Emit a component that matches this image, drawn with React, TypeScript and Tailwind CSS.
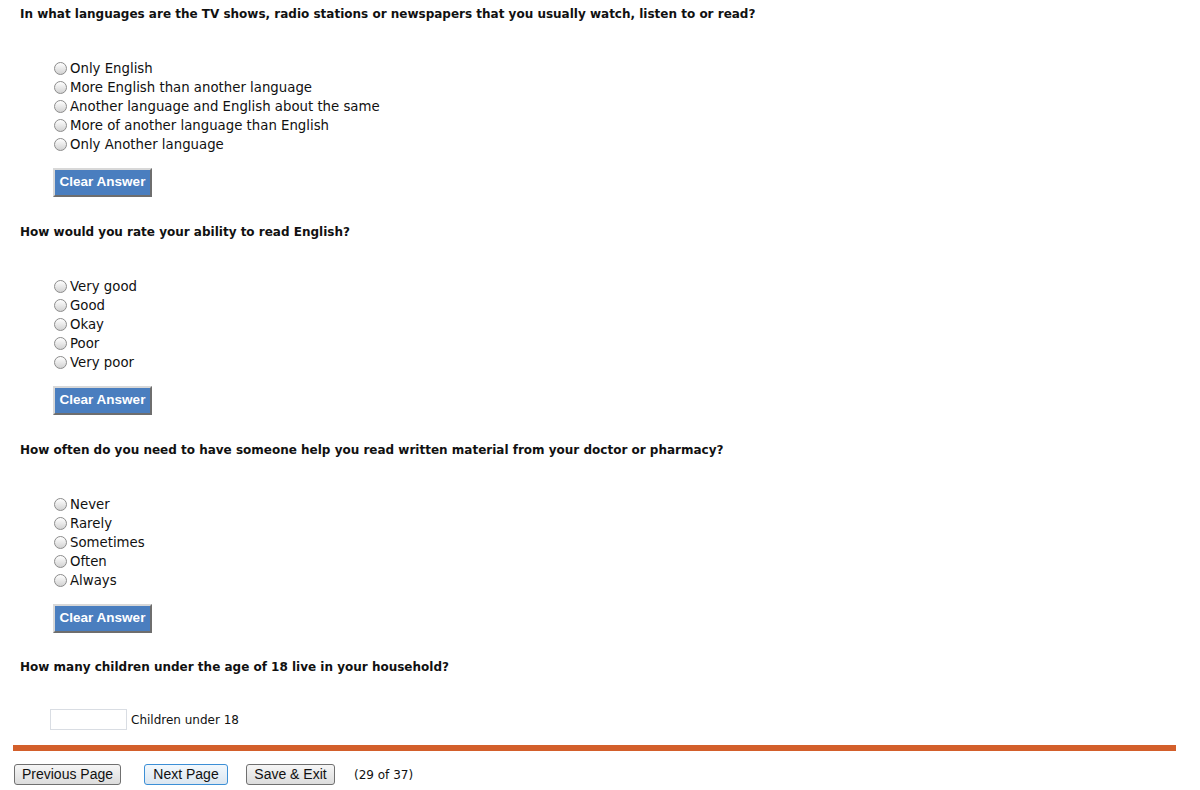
import { useState } from 'react';

const questions = [
  {
    text: 'In what languages are the TV shows, radio stations or newspapers that you usually watch, listen to or read?',
    options: [
      'Only English',
      'More English than another language',
      'Another language and English about the same',
      'More of another language than English',
      'Only Another language',
    ],
  },
  {
    text: 'How would you rate your ability to read English?',
    options: ['Very good', 'Good', 'Okay', 'Poor', 'Very poor'],
  },
  {
    text: 'How often do you need to have someone help you read written material from your doctor or pharmacy?',
    options: ['Never', 'Rarely', 'Sometimes', 'Often', 'Always'],
  },
];

function Radio({ checked }: { checked: boolean }) {
  return (
    <span className="inline-flex w-[13px] h-[13px] rounded-full border border-[#8c8c8c] bg-[linear-gradient(#ffffff,#d2d2d2)] items-center justify-center shrink-0">
      {checked && <span className="w-[5px] h-[5px] rounded-full bg-[#333]" />}
    </span>
  );
}

function Question({ text, options }: { text: string; options: string[] }) {
  const [value, setValue] = useState<number | null>(null);
  return (
    <div className="ml-[7px]">
      <div className="font-bold text-[12px] leading-[16px] text-[#111]">{text}</div>
      <div className="mt-[37px] ml-[34px] flex flex-col">
        {options.map((o, i) => (
          <label
            key={o}
            className="flex items-center gap-[3px] h-[19px] text-[13.3px] text-[#111] cursor-pointer"
            onClick={() => setValue(i)}
          >
            <Radio checked={value === i} />
            <span>{o}</span>
          </label>
        ))}
      </div>
      <button
        onClick={() => setValue(null)}
        className="mt-[14px] ml-[33px] w-[99px] h-[29px] bg-[#4a7ebf] text-white font-bold text-[13.5px] whitespace-nowrap border-2 border-t-[#d8d8d8] border-l-[#d8d8d8] border-r-[#6e6e6e] border-b-[#6e6e6e] [font-family:'Liberation_Sans',Arial,sans-serif]"
      >
        Clear Answer
      </button>
      <div className="h-[27px]" />
    </div>
  );
}

const navBtn =
  "h-[21px] px-0 whitespace-nowrap text-[14px] leading-[19px] text-[#111] rounded-[3px] border [font-family:'Liberation_Sans',Arial,sans-serif]";

export default function App() {
  return (
    <div className="min-h-screen bg-white pt-[6px] pl-[13px] pr-[24px] [font-family:'DejaVu_Sans',Verdana,sans-serif]">
      {questions.map((q) => (
        <Question key={q.text} text={q.text} options={q.options} />
      ))}
      <div className="ml-[7px] -mt-[1px]">
        <div className="font-bold text-[12px] leading-[16px] text-[#111]">
          How many children under the age of 18 live in your household?
        </div>
        <div className="mt-[34px] ml-[30px] flex items-center gap-[4px]">
          <input className="w-[77px] h-[21px] border border-[#d9dde3] outline-none px-1 text-[12px]" />
          <span className="text-[12px] text-[#111]">Children under 18</span>
        </div>
      </div>
      <div className="mt-[15px] h-[6px] bg-[#d35f2b]" />
      <div className="mt-[13px] ml-[1px] flex items-center">
        <button className={`${navBtn} w-[107px] border-[#707070] bg-[linear-gradient(#f6f6f6,#dcdcdc)]`}>Previous Page</button>
        <button className={`${navBtn} ml-[23px] w-[84px] border-[#3c8fd6] bg-[linear-gradient(#f2f8fd,#dbe6f0)]`}>Next Page</button>
        <button className={`${navBtn} ml-[18px] w-[89px] border-[#707070] bg-[linear-gradient(#f6f6f6,#dcdcdc)]`}>Save &amp; Exit</button>
        <span className="ml-[19px] text-[12px] text-[#111]">(29 of 37)</span>
      </div>
    </div>
  );
}
